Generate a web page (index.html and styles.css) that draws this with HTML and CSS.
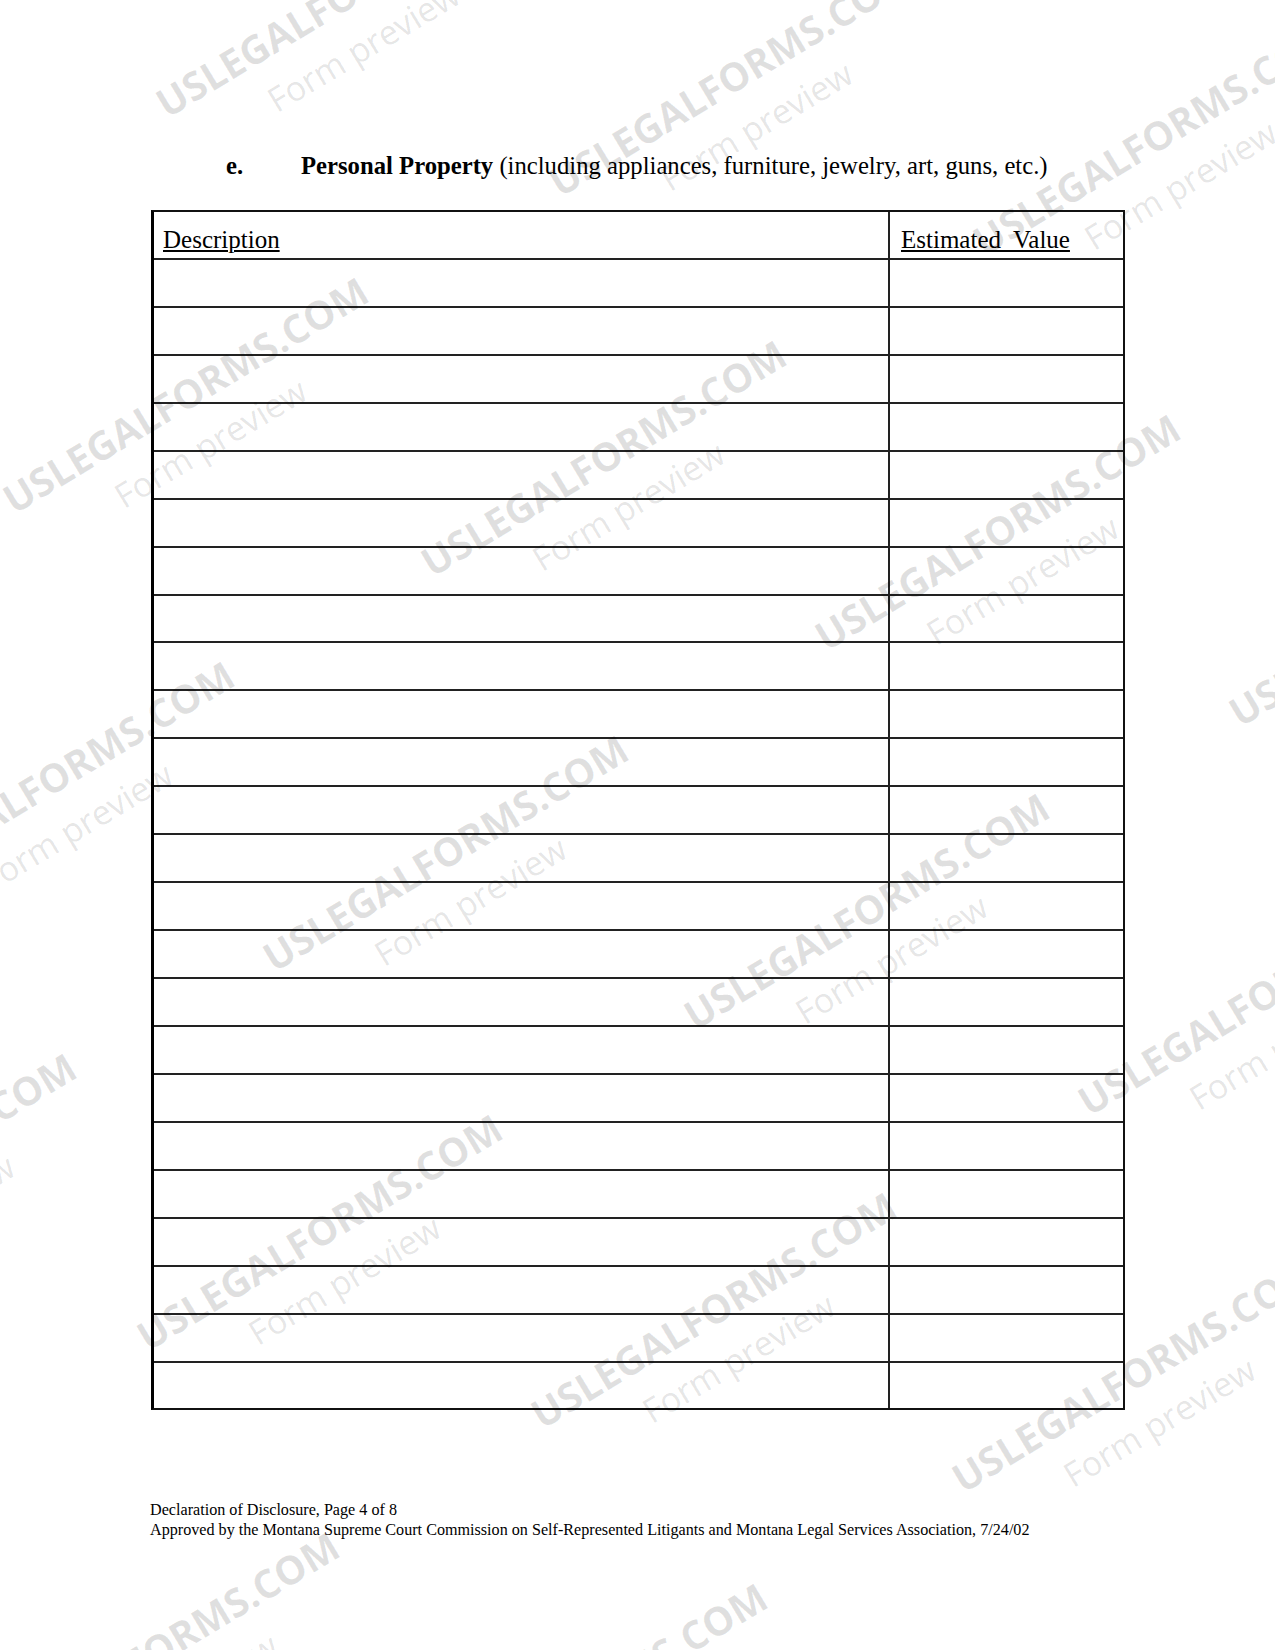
FILE: index.html
```html
<!DOCTYPE html>
<html lang="en">
<head>
<meta charset="utf-8">
<title>Declaration of Disclosure, Page 4 of 8</title>
<link rel="stylesheet" href="styles.css">
</head>
<body>
<div class="page">
  <h2 class="heading"><span class="letter">e.</span><span class="title"><b>Personal Property</b> (including appliances, furniture, jewelry, art, guns, etc.)</span></h2>

  <div class="table">
    <div class="row head"><div class="cell desc"><u>Description</u></div><div class="cell val"><u>Estimated&nbsp; Value</u></div></div>
    <div class="row"><div class="cell desc"></div><div class="cell val"></div></div>
    <div class="row"><div class="cell desc"></div><div class="cell val"></div></div>
    <div class="row"><div class="cell desc"></div><div class="cell val"></div></div>
    <div class="row"><div class="cell desc"></div><div class="cell val"></div></div>
    <div class="row"><div class="cell desc"></div><div class="cell val"></div></div>
    <div class="row"><div class="cell desc"></div><div class="cell val"></div></div>
    <div class="row"><div class="cell desc"></div><div class="cell val"></div></div>
    <div class="row"><div class="cell desc"></div><div class="cell val"></div></div>
    <div class="row"><div class="cell desc"></div><div class="cell val"></div></div>
    <div class="row"><div class="cell desc"></div><div class="cell val"></div></div>
    <div class="row"><div class="cell desc"></div><div class="cell val"></div></div>
    <div class="row"><div class="cell desc"></div><div class="cell val"></div></div>
    <div class="row"><div class="cell desc"></div><div class="cell val"></div></div>
    <div class="row"><div class="cell desc"></div><div class="cell val"></div></div>
    <div class="row"><div class="cell desc"></div><div class="cell val"></div></div>
    <div class="row"><div class="cell desc"></div><div class="cell val"></div></div>
    <div class="row"><div class="cell desc"></div><div class="cell val"></div></div>
    <div class="row"><div class="cell desc"></div><div class="cell val"></div></div>
    <div class="row"><div class="cell desc"></div><div class="cell val"></div></div>
    <div class="row"><div class="cell desc"></div><div class="cell val"></div></div>
    <div class="row"><div class="cell desc"></div><div class="cell val"></div></div>
    <div class="row"><div class="cell desc"></div><div class="cell val"></div></div>
    <div class="row"><div class="cell desc"></div><div class="cell val"></div></div>
    <div class="row last"><div class="cell desc"></div><div class="cell val"></div></div>
  </div>

  <footer class="footer">
    <div>Declaration of Disclosure, Page 4 of 8</div>
    <div>Approved by the Montana Supreme Court Commission on Self-Represented Litigants and Montana Legal Services Association, 7/24/02</div>
  </footer>

  <svg class="watermarks" width="1275" height="1650" viewBox="0 0 1275 1650" aria-hidden="true">
    <g transform="translate(167,119) rotate(-31)"><text class="wm1">USLEGALFORMS.COM</text><text class="wm2" x="97" y="52">Form preview</text></g>
    <g transform="translate(560,198) rotate(-31)"><text class="wm1">USLEGALFORMS.COM</text><text class="wm2" x="97" y="52">Form preview</text></g>
    <g transform="translate(984,257) rotate(-31)"><text class="wm1">USLEGALFORMS.COM</text><text class="wm2" x="97" y="52">Form preview</text></g>
    <g transform="translate(14,515) rotate(-31)"><text class="wm1">USLEGALFORMS.COM</text><text class="wm2" x="97" y="52">Form preview</text></g>
    <g transform="translate(432,578) rotate(-31)"><text class="wm1">USLEGALFORMS.COM</text><text class="wm2" x="97" y="52">Form preview</text></g>
    <g transform="translate(826,652) rotate(-31)"><text class="wm1">USLEGALFORMS.COM</text><text class="wm2" x="97" y="52">Form preview</text></g>
    <g transform="translate(-120,899) rotate(-31)"><text class="wm1">USLEGALFORMS.COM</text><text class="wm2" x="97" y="52">Form preview</text></g>
    <g transform="translate(1240,728) rotate(-31)"><text class="wm1">USLEGALFORMS.COM</text><text class="wm2" x="97" y="52">Form preview</text></g>
    <g transform="translate(274,973) rotate(-31)"><text class="wm1">USLEGALFORMS.COM</text><text class="wm2" x="97" y="52">Form preview</text></g>
    <g transform="translate(695,1031) rotate(-31)"><text class="wm1">USLEGALFORMS.COM</text><text class="wm2" x="97" y="52">Form preview</text></g>
    <g transform="translate(-278,1291) rotate(-31)"><text class="wm1">USLEGALFORMS.COM</text><text class="wm2" x="97" y="52">Form preview</text></g>
    <g transform="translate(1089,1117) rotate(-31)"><text class="wm1">USLEGALFORMS.COM</text><text class="wm2" x="97" y="52">Form preview</text></g>
    <g transform="translate(148,1352) rotate(-31)"><text class="wm1">USLEGALFORMS.COM</text><text class="wm2" x="97" y="52">Form preview</text></g>
    <g transform="translate(542,1430) rotate(-31)"><text class="wm1">USLEGALFORMS.COM</text><text class="wm2" x="97" y="52">Form preview</text></g>
    <g transform="translate(963,1494) rotate(-31)"><text class="wm1">USLEGALFORMS.COM</text><text class="wm2" x="97" y="52">Form preview</text></g>
    <g transform="translate(-15,1770) rotate(-31)"><text class="wm1">USLEGALFORMS.COM</text><text class="wm2" x="97" y="52">Form preview</text></g>
    <g transform="translate(413,1821) rotate(-31)"><text class="wm1">USLEGALFORMS.COM</text><text class="wm2" x="97" y="52">Form preview</text></g>
  </svg>
</div>
</body>
</html>
```

FILE: styles.css
```css
html, body {
  margin: 0;
  padding: 0;
  background: #ffffff;
}

.page {
  position: relative;
  width: 1275px;
  height: 1650px;
  overflow: hidden;
  font-family: "Liberation Serif", "Times New Roman", serif;
  color: #000;
}

.heading {
  display: flex;
  margin: 0;
  padding-top: 151px;
  padding-left: 226px;
  font-size: 24.7px;
  line-height: 29px;
  font-weight: normal;
}

.letter {
  font-weight: bold;
  width: 75px;
}

.title b {
  font-weight: bold;
}

.table {
  margin-top: 30px;
  margin-left: 151px;
  width: 969px;
  border-top: 2px solid #111;
  border-right: 2px solid #111;
  border-bottom: 2px solid #111;
  border-left: 3px solid #000;
}

.row {
  display: grid;
  grid-template-columns: 736px 1fr;
  height: 45.95px;
  border-bottom: 2px solid #222;
}

.row.last {
  border-bottom: none;
}

.cell.desc {
  border-right: 2px solid #222;
}

.head .cell {
  font-size: 25px;
  line-height: 29px;
  padding-top: 13px;
}

.head .desc {
  padding-left: 9px;
}

.head .val {
  padding-left: 11px;
}

.head u {
  text-decoration-thickness: 1.5px;
  text-underline-offset: 2px;
}

.footer {
  margin-top: 90px;
  margin-left: 150px;
  font-size: 16.15px;
  line-height: 19.5px;
}

.watermarks {
  position: absolute;
  left: 0;
  top: 0;
  pointer-events: none;
}

.wm1 {
  font-family: "Open Sans", "DejaVu Sans", sans-serif;
  font-weight: 700;
  font-size: 39.5px;
  fill: #000;
  fill-opacity: 0.12;
}

.wm2 {
  font-family: "Open Sans", "DejaVu Sans", sans-serif;
  font-weight: 400;
  font-size: 34px;
  fill: #000;
  fill-opacity: 0.11;
}
```
